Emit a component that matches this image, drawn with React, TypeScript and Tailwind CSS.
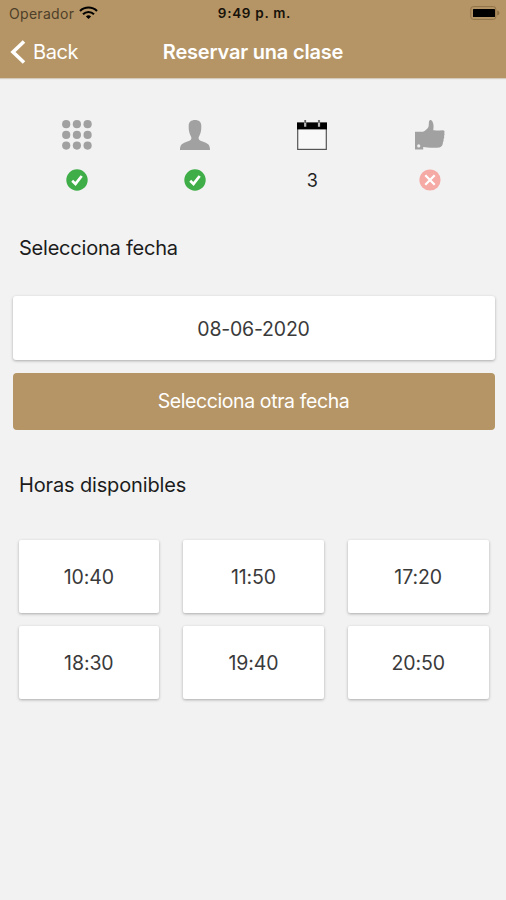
import React, { useState } from 'react';

const hours = ['10:40', '11:50', '17:20', '18:30', '19:40', '20:50'];

const WifiIcon = () => (
  <svg width="19" height="14" viewBox="0 0 19 14" fill="none" stroke="#000" strokeWidth="2.1">
    <path d="M1 5a12.2 12.2 0 0 1 17 0" />
    <path d="M4 8.200a7.900 7.900 0 0 1 11 0" />
    <path d="M9.500 13 6.900 10.500a3.800 3.800 0 0 1 5.200 0z" fill="#000" stroke="none" />
  </svg>
);

const BatteryIcon = () => (
  <svg width="30" height="14" viewBox="0 0 30 14">
    <rect x="0.8" y="0.6" width="25" height="12.8" rx="2.5" fill="none" stroke="#8f7248" />
    <rect x="3" y="2.9" width="22" height="8.200" rx="0.6" fill="#000" />
    <path d="M27.200 4.600c1.600.5 2.200 1.500 2.200 2.500s-.6 2-2.200 2.500z" fill="#8a6e45" />
  </svg>
);

const GridIcon = () => (
  <svg width="30" height="30" viewBox="0 0 30 30" fill="#a1a1a1">
    {[4.2, 14.9, 25.6].map((y) =>
      [4.2, 14.9, 25.6].map((x) => <circle key={`${x}-${y}`} cx={x} cy={y} r="4.1" />)
    )}
  </svg>
);

const PersonIcon = () => (
  <svg width="30" height="30" viewBox="0 0 30 30" fill="#a1a1a1">
    <path d="M15 0c4 0 6.300 2 6.300 6 0 1.800 0 2.900-.2 4.300-.3 2.500-1.200 4.700-2.200 6.400-.5.900-.4 2.300.3 3 .9.900 2.600 1.500 5.300 2.600 3.700 1.500 5.500 2.900 5.500 7.700H0c0-4.800 1.800-6.200 5.500-7.700 2.700-1.100 4.400-1.700 5.300-2.600.7-.7.800-2.100.3-3C10.100 15 9.200 12.800 8.900 10.300 8.700 8.900 8.700 7.800 8.700 6 8.700 2 11 0 15 0z" />
  </svg>
);

const CalendarIcon = () => (
  <svg width="30" height="30" viewBox="0 0 30 30">
    <rect x="0.7" y="3.500" width="28.600" height="25.900" fill="#f8f8f8" stroke="#555" strokeWidth="1.200" />
    <path d="M0 2.400h30v7H0z" fill="#000" />
    <path d="M8.200 0v6.800M22 0v6.800" stroke="#b8b8b8" strokeWidth="2.200" />
    <path d="M8.200 0v3M22 0v3" stroke="#444" strokeWidth="1.200" />
  </svg>
);

const ThumbIcon = () => (
  <svg width="30" height="30" viewBox="0 0 30 30">
    <path
      d="M0 11.700h8c2-.7 4.500-2.600 5.300-4.400.7-1.800.4-4 .7-5.900.3-1.500 1.700-1.900 2.700-.8 2 2.200 2.200 6 1.500 9.700 3.500.4 6.500-.1 9.600-.1 1.800 0 2.200 1.700 1.400 2.800.6 1 .4 2.200-.2 2.900.5 1.300.2 2.400-.5 3.200.3 1.300 0 2.400-.6 3.200.2 2.500-1.200 4.600-3.400 5.100-3.200.6-8.300.6-12 .1-1.600-.2-2.700-.6-4.300-.6v2.700H0z"
      fill="#a1a1a1"
    />
    <circle cx="3.700" cy="25.900" r="1.600" fill="#eee" />
  </svg>
);

const CheckBadge = () => (
  <svg width="22" height="22" viewBox="0 0 22 22">
    <circle cx="11" cy="11" r="10.700" fill="#3fae49" />
    <path d="M6.200 11.700 9.500 14.900 15.700 7" fill="none" stroke="#fff" strokeWidth="2.700" />
  </svg>
);

const CrossBadge = () => (
  <svg width="22" height="22" viewBox="0 0 22 22">
    <circle cx="11" cy="11" r="10.600" fill="#f5aaa6" />
    <path d="m6.300 6.300 9.400 9.400m0-9.400-9.400 9.400" stroke="#fff" strokeWidth="2.200" />
  </svg>
);

const steps = [
  { id: 'service', icon: <GridIcon />, status: <CheckBadge /> },
  { id: 'person', icon: <PersonIcon />, status: <CheckBadge /> },
  { id: 'date', icon: <CalendarIcon />, status: <span className="pt-[2px] text-[18px] leading-[22px] text-[#222]">3</span> },
  { id: 'confirm', icon: <ThumbIcon />, status: <CrossBadge /> },
];

export default function App() {
  const [selected, setSelected] = useState('');

  return (
    <div className="h-[900px] w-[506px] overflow-hidden bg-[#f2f2f2] font-['Inter','Liberation_Sans',sans-serif] text-[#1c1c1c]">
      <header className="h-[78px] bg-[#b59565] shadow-[0_1px_1px_#d5cbbc]">
        <div className="grid h-[26px] grid-cols-3 items-center pr-[6px] pl-[9px]">
          <div className="flex items-center gap-[5px] text-[14px] tracking-[0.3px] text-[#4e4029]">
            Operador
            <WifiIcon />
          </div>
          <div className="pt-px text-center text-[13.5px] font-semibold tracking-[0.7px] text-[#17120a]">9:49 p. m.</div>
          <div className="flex justify-end">
            <BatteryIcon />
          </div>
        </div>
        <div className="grid h-[52px] grid-cols-[1fr_auto_1fr] items-center px-[10px] text-white">
          <button className="flex items-center gap-[7px] text-[20px] tracking-[-0.4px]">
            <svg width="16" height="24" viewBox="0 0 16 24" fill="none" stroke="#fff" strokeWidth="3.600">
              <path d="M14 1.500 3 12l11 10.500" />
            </svg>
            Back
          </button>
          <h1 className="text-[20px] font-semibold tracking-[-0.2px]">Reservar una clase</h1>
        </div>
      </header>

      <main>
        <div className="grid grid-cols-4 pt-[42px] pr-[17.5px] pl-[18.5px]">
          {steps.map((step) => (
            <div key={step.id} className="flex flex-col items-center gap-[18.5px]">
              {step.icon}
              <div className="flex h-[22px] items-center">{step.status}</div>
            </div>
          ))}
        </div>

        <h2 className="mt-[42.5px] ml-[19px] text-[20px] leading-[30px] tracking-[-0.22px]">Selecciona fecha</h2>
        <div className="mt-[33px] mr-[11.5px] ml-[12.5px] flex h-[63.5px] items-center justify-center rounded-[3px] bg-white pt-[3px] text-[19.5px] tracking-[-0.2px] text-[#3a3a3a] shadow-[0_1px_3px_rgba(0,0,0,0.3)]">
          08-06-2020
        </div>
        <button className="mt-[13px] mr-[11.5px] ml-[12.5px] flex h-[57px] w-[482px] items-center justify-center rounded-[4px] bg-[#b59565] pt-[2px] text-[19.5px] tracking-[-0.4px] text-white">
          Selecciona otra fecha
        </button>

        <h2 className="mt-[40.5px] ml-[19px] text-[20px] leading-[30px] tracking-[-0.15px]">Horas disponibles</h2>
        <div className="mt-[40px] grid grid-cols-3 gap-x-[24px] gap-y-[13px] pr-[17.5px] pl-[18.5px]">
          {hours.map((hour) => (
            <button
              key={hour}
              onClick={() => setSelected(hour)}
              aria-pressed={selected === hour}
              className="flex h-[73px] items-center justify-center rounded-[2px] bg-white pt-[2px] text-[19.5px] tracking-[-0.1px] text-[#3a3a3a] shadow-[0_1px_3px_rgba(0,0,0,0.3)]"
            >
              {hour}
            </button>
          ))}
        </div>
      </main>
    </div>
  );
}
